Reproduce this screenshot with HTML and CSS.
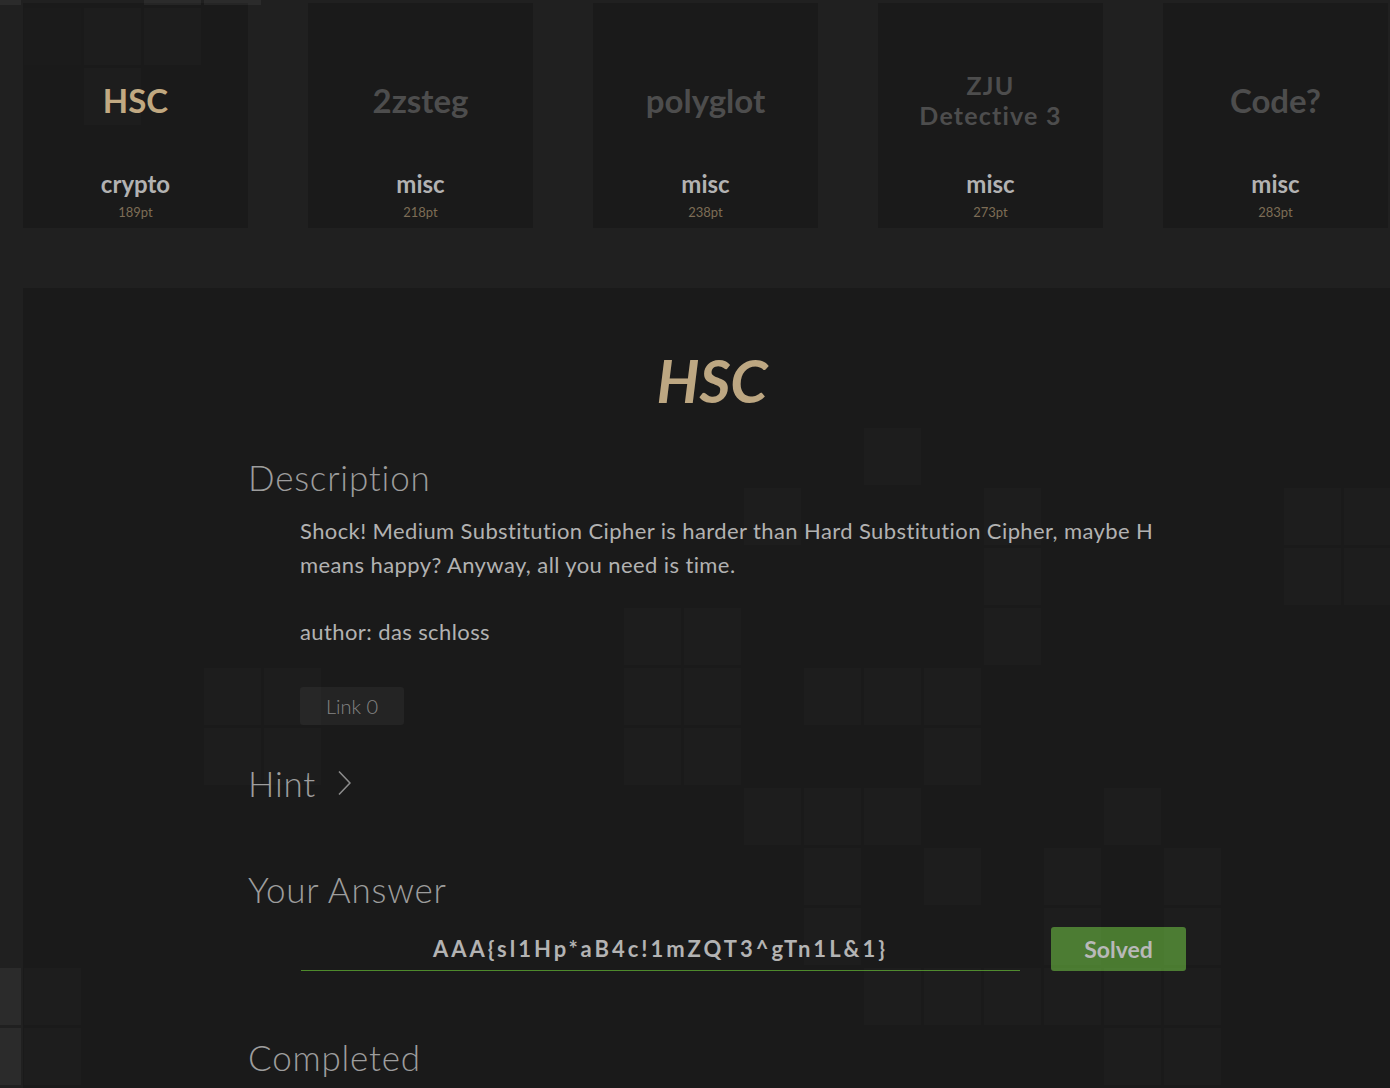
FILE: index.html
```html
<!DOCTYPE html>
<html lang="en">
<head>
<meta charset="utf-8">
<title>HSC</title>
<link rel="stylesheet" href="styles.css">
</head>
<body>
<div class="page">
  <div class="cards">
    <div class="card solved">
      <div class="card-title">HSC</div>
      <div class="card-cat">crypto</div>
      <div class="card-pts">189pt</div>
    </div>
    <div class="card">
      <div class="card-title">2zsteg</div>
      <div class="card-cat">misc</div>
      <div class="card-pts">218pt</div>
    </div>
    <div class="card">
      <div class="card-title">polyglot</div>
      <div class="card-cat">misc</div>
      <div class="card-pts">238pt</div>
    </div>
    <div class="card">
      <div class="card-title long"><span>ZJU</span><span>Detective 3</span></div>
      <div class="card-cat">misc</div>
      <div class="card-pts">273pt</div>
    </div>
    <div class="card">
      <div class="card-title">Code?</div>
      <div class="card-cat">misc</div>
      <div class="card-pts">283pt</div>
    </div>
  </div>

  <section class="panel">
    <div class="content">
      <h1 class="title">HSC</h1>

      <h2 class="sec">Description</h2>
      <div class="desc">
        <p class="desc-text">Shock! Medium Substitution Cipher is harder than Hard Substitution Cipher, maybe H means happy? Anyway, all you need is time.</p>
        <p class="desc-text author">author: das schloss</p>
        <a class="link-btn">Link 0</a>
      </div>

      <h2 class="sec hint">Hint
        <svg class="chev" width="13" height="26" viewBox="0 0 13 26"><polyline points="1,1.5 12,13 1,24.5" fill="none" stroke="#8c8c8c" stroke-width="1.6"/></svg>
      </h2>

      <h2 class="sec answer-h">Your Answer</h2>
      <div class="answer-row">
        <div class="answer-input">AAA{sl1Hp*aB4c!1mZQT3^gTn1L&amp;1}</div>
        <button class="solved-btn">Solved</button>
      </div>

      <h2 class="sec completed">Completed</h2>
    </div>
  </section>

  <div class="tiles" aria-hidden="true">
    <i class="tile bright" style="left:-36px;top:-52px"></i>
    <i class="tile bright" style="left:144px;top:-52px"></i>
    <i class="tile bright" style="left:204px;top:-52px"></i>
    <i class="tile faint" style="left:24px;top:8px"></i>
    <i class="tile" style="left:84px;top:8px"></i>
    <i class="tile" style="left:144px;top:8px"></i>
    <i class="tile" style="left:84px;top:68px"></i>

    <i class="tile" style="left:864px;top:428px"></i>
    <i class="tile" style="left:744px;top:488px"></i>
    <i class="tile" style="left:984px;top:488px"></i>
    <i class="tile" style="left:1284px;top:488px"></i>
    <i class="tile" style="left:1344px;top:488px"></i>
    <i class="tile" style="left:984px;top:548px"></i>
    <i class="tile" style="left:1284px;top:548px"></i>
    <i class="tile" style="left:1344px;top:548px"></i>
    <i class="tile" style="left:624px;top:608px"></i>
    <i class="tile" style="left:684px;top:608px"></i>
    <i class="tile" style="left:984px;top:608px"></i>
    <i class="tile" style="left:204px;top:668px"></i>
    <i class="tile" style="left:264px;top:668px"></i>
    <i class="tile" style="left:624px;top:668px"></i>
    <i class="tile" style="left:684px;top:668px"></i>
    <i class="tile" style="left:804px;top:668px"></i>
    <i class="tile" style="left:864px;top:668px"></i>
    <i class="tile" style="left:924px;top:668px"></i>
    <i class="tile" style="left:204px;top:728px"></i>
    <i class="tile" style="left:264px;top:728px"></i>
    <i class="tile" style="left:624px;top:728px"></i>
    <i class="tile" style="left:684px;top:728px"></i>
    <i class="tile" style="left:924px;top:728px"></i>
    <i class="tile" style="left:744px;top:788px"></i>
    <i class="tile" style="left:804px;top:788px"></i>
    <i class="tile" style="left:864px;top:788px"></i>
    <i class="tile" style="left:1104px;top:788px"></i>
    <i class="tile" style="left:804px;top:848px"></i>
    <i class="tile" style="left:924px;top:848px"></i>
    <i class="tile" style="left:1044px;top:848px"></i>
    <i class="tile" style="left:1164px;top:848px"></i>
    <i class="tile" style="left:804px;top:908px"></i>
    <i class="tile" style="left:1044px;top:908px"></i>
    <i class="tile" style="left:1164px;top:908px"></i>
    <i class="tile bright" style="left:-36px;top:968px"></i>
    <i class="tile" style="left:24px;top:968px"></i>
    <i class="tile" style="left:864px;top:968px"></i>
    <i class="tile" style="left:924px;top:968px"></i>
    <i class="tile" style="left:984px;top:968px"></i>
    <i class="tile" style="left:1044px;top:968px"></i>
    <i class="tile" style="left:1104px;top:968px"></i>
    <i class="tile" style="left:1164px;top:968px"></i>
    <i class="tile bright" style="left:-36px;top:1028px"></i>
    <i class="tile" style="left:24px;top:1028px"></i>
    <i class="tile" style="left:1104px;top:1028px"></i>
    <i class="tile" style="left:1164px;top:1028px"></i>
  </div>
</div>
</body>
</html>
```

FILE: styles.css
```css
html, body {
  margin: 0;
  padding: 0;
}

body {
  background: #202020;
  font-family: Lato, "Open Sans", "DejaVu Sans", sans-serif;
  color: #b0b0b0;
  height: 1088px;
  overflow: hidden;
}

.page {
  position: relative;
  height: 1088px;
  overflow: hidden;
}

/* ---------- challenge cards ---------- */
.cards {
  display: flex;
  gap: 60px;
  padding: 3px 0 0 23px;
}

.card {
  flex: 0 0 225px;
  height: 225px;
  box-sizing: border-box;
  background: #1a1a1a;
  display: flex;
  flex-direction: column;
  align-items: center;
  padding-top: 25px;
}

.card-title {
  height: 144px;
  display: flex;
  flex-direction: column;
  align-items: center;
  justify-content: center;
  text-align: center;
  font-weight: 700;
  font-size: 33px;
  line-height: 40px;
  color: #4d4d4d;
}

.card.solved .card-title {
  color: #c0a880;
}

.card-title.long {
  font-size: 25px;
  line-height: 30px;
  letter-spacing: 1.2px;
  padding-bottom: 1px;
  box-sizing: border-box;
}

.card-cat {
  font-size: 24px;
  line-height: 24px;
  font-weight: 700;
  color: #b2b2b2;
}

.card-pts {
  margin-top: 8px;
  font-size: 13px;
  line-height: 16px;
  font-weight: 400;
  color: #7d6d56;
}

/* ---------- detail panel ---------- */
.panel {
  margin: 60px 0 0 23px;
  background: #1a1a1a;
  height: 820px;
  padding-left: 225px;
}

.content {
  width: 928px;
}

.title {
  margin: 0;
  padding-top: 56px;
  text-align: center;
  font-size: 60px;
  line-height: 72px;
  font-style: italic;
  font-weight: 700;
  color: #bda782;
}

.sec {
  margin: 0;
  font-size: 35px;
  line-height: 42px;
  font-weight: 300;
  letter-spacing: 0.8px;
  color: #9d9d9d;
  display: flex;
  align-items: center;
}

.sec:first-of-type {
  margin-top: 40px;
}

.desc {
  padding-left: 52px;
  padding-top: 16px;
}

.desc-text {
  margin: 0;
  font-size: 22px;
  line-height: 34px;
  font-weight: 400;
  color: #b2b2b2;
  letter-spacing: 0.4px;
}

.desc-text.author {
  margin-top: 33px;
}

.link-btn {
  display: inline-flex;
  align-items: center;
  justify-content: center;
  margin-top: 38px;
  width: 104px;
  height: 38px;
  border-radius: 3px;
  background: #242424;
  color: #858585;
  font-size: 20px;
  font-weight: 300;
}

.hint {
  margin-top: 37px;
  gap: 22px;
}

.chev {
  display: block;
}

.answer-h {
  margin-top: 64px;
}

.answer-row {
  display: flex;
  align-items: center;
  gap: 31px;
  padding-left: 53px;
  margin-top: 17px;
}

.answer-input {
  flex: 0 0 719px;
  height: 44px;
  box-sizing: border-box;
  border-bottom: 1px solid #4e8a2c;
  text-align: center;
  font-size: 22px;
  line-height: 44px;
  font-weight: 700;
  letter-spacing: 3px;
  color: #b3b3b3;
}

.solved-btn {
  flex: 0 0 135px;
  height: 44px;
  border: 0;
  border-radius: 3px;
  background: #4a7a30;
  color: #b8b8b8;
  font-family: inherit;
  font-size: 23px;
  font-weight: 700;
  padding: 0;
}

.completed {
  margin-top: 65px;
}

/* ---------- decorative tile field ---------- */
.tiles {
  position: absolute;
  inset: 0;
  pointer-events: none;
}

.tile {
  position: absolute;
  width: 57px;
  height: 57px;
  background: rgba(255, 255, 255, 0.017);
}

.tile.faint {
  background: rgba(255, 255, 255, 0.009);
}

.tile.bright {
  background: rgba(255, 255, 255, 0.05);
}
```
